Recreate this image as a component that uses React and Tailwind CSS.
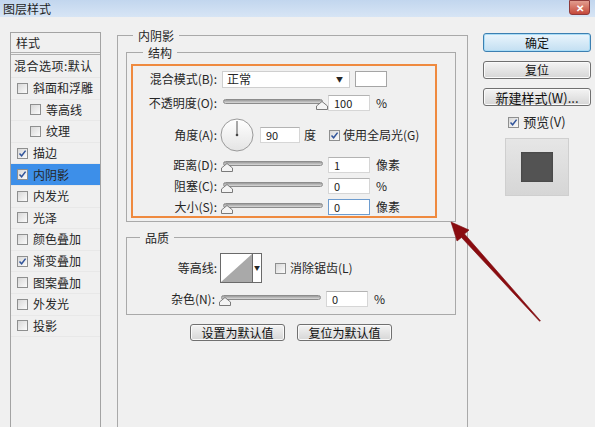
import React from 'react';

const Check = ({ checked }) => (
  <span className="flex h-[11px] w-[11px] shrink-0 items-center justify-center border border-[#8e8f8f] bg-linear-to-br from-[#d8d8d8] to-[#fbfbfb]">
    {checked && (
      <svg width="9" height="9" viewBox="0 0 9 9">
        <path d="M1.5 4.5 L3.6 6.8 L7.6 1.6" stroke="#30549a" strokeWidth="1.5" fill="none" />
      </svg>
    )}
  </span>
);

const Slider = ({ end }) => (
  <div className="relative h-[14px] w-[104px] shrink-0">
    <div className="absolute left-[2px] top-[3px] h-[5px] w-[100px] rounded-full border border-[#8c8c8c] bg-linear-to-b from-[#9a9a9a] to-[#dadada]" />
    <svg className={`absolute top-[5px] ${end ? 'left-[95px]' : 'left-0'}`} width="12" height="9" viewBox="0 0 12 9">
      <polygon points="6,0.5 11.5,5 11.5,8.5 0.5,8.5 0.5,5" fill="#f4f4f4" stroke="#7a7a7a" />
    </svg>
  </div>
);

const Field = ({ value, w = 'w-[42px]', focus }) => (
  <div className={`${w} h-[16px] shrink-0 border bg-white pl-[5px] text-[11px] leading-[14px] text-[#222] ${focus ? 'border-[#6d9ccf]' : 'border-[#d6d6d6] border-t-[#b3b3b3]'}`}>
    {value}
  </div>
);

const Btn = ({ children, primary, className = '' }) => (
  <div
    className={`flex items-center justify-center rounded-[3px] border text-[12px] leading-none text-[#111] ${
      primary
        ? 'border-[#3c7fb1] bg-linear-to-b from-[#eaf5fc] to-[#c3dff2] shadow-[inset_0_0_0_1px_#a9dcf6]'
        : 'border-[#707070] bg-linear-to-b from-[#f4f4f4] to-[#d6d6d6] shadow-[inset_0_0_0_1px_#fafafa]'
    } ${className}`}
  >
    {children}
  </div>
);

const effects = [
  { t: '斜面和浮雕' },
  { t: '等高线', sub: true },
  { t: '纹理', sub: true },
  { t: '描边', c: true },
  { t: '内阴影', c: true, active: true },
  { t: '内发光' },
  { t: '光泽' },
  { t: '颜色叠加' },
  { t: '渐变叠加', c: true },
  { t: '图案叠加' },
  { t: '外发光' },
  { t: '投影' },
];

const SliderRow = ({ label, value, unit, end, focus, labelW = 'w-[84px]', mt }) => (
  <div className={`flex h-[18px] items-center ${mt}`}>
    <div className={`${labelW} shrink-0 text-right`}>{label}</div>
    <div className="ml-[4px]">
      <Slider end={end} />
    </div>
    <div className="ml-[3px]">
      <Field value={value} focus={focus} />
    </div>
    <div className="ml-[6px]">{unit}</div>
  </div>
);

export default function App() {
  return (
    <div className="relative h-[427px] w-[595px] overflow-hidden bg-[#f0f0f0] font-['Noto_Sans_CJK_SC',sans-serif] text-[12px] leading-[16px] text-[#262626]">
      {/* title bar */}
      <div className="relative flex h-[17px] items-center bg-linear-to-b from-[#c2d6ee] to-[#d7e5f5] pl-[3px] text-[12px] text-[#1e1e1e]">
        图层样式
        <div className="absolute right-[5px] top-0 flex h-[15px] w-[21px] items-center justify-center rounded-b-[3px] border border-[#8e3a3a] bg-linear-to-b from-[#e19c8e] to-[#c4473a] text-[10px] font-bold leading-none text-white">
          ✕
        </div>
      </div>

      <div className="flex">
        {/* left list */}
        <div className="ml-[10px] mt-[15px] h-[420px] w-[91px] shrink-0 border border-[#a3a3a3]">
          <div className="flex h-[22px] items-center border-b-[3px] border-double border-[#b0b0b0] pl-[5px]">样式</div>
          <div className="flex h-[23px] items-center whitespace-nowrap border-b border-[#e6e6e6] pl-[3px] tracking-[0.5px]">混合选项:默认</div>
          {effects.map((e) => (
            <div
              key={e.t}
              className={`flex h-[21.6px] items-center gap-[5px] border-b border-[#e8e8e8] ${e.sub ? 'pl-[19px]' : 'pl-[6px]'} ${
                e.active ? 'bg-[#3d8fe9]' : ''
              }`}
            >
              <Check checked={e.c} />
              <span>{e.t}</span>
            </div>
          ))}
        </div>

        {/* middle */}
        <fieldset className="ml-[16px] mt-[10px] h-[420px] w-[351px] shrink-0 border border-[#a9a9a9]">
          <legend className="ml-[15px] px-[5px] leading-[17px]">内阴影</legend>

          <fieldset className="ml-[8px] w-[330px] border border-[#a9a9a9] pb-[3px]">
            <legend className="ml-[16px] px-[5px] leading-[17px]">结构</legend>
            <div className="ml-[4px] mt-[3px] h-[154px] w-[306px] border-2 border-[#ef8a3f]">
              <div className="mt-[4px] flex h-[18px] items-center">
                <div className="w-[84px] shrink-0 text-right">混合模式(B):</div>
                <div className="ml-[5px] flex h-[17px] w-[128px] items-center justify-between border border-[#cfcfcf] bg-white pl-[4px] pr-[6px]">
                  <span>正常</span>
                  <span className="text-[7px] leading-none">▼</span>
                </div>
                <div className="ml-[5px] h-[16px] w-[32px] border border-[#a5a5a5] bg-white" />
              </div>

              <SliderRow label="不透明度(O):" value="100" unit="%" end mt="mt-[6px]" />

              <div className="mt-[6px] flex h-[34px] items-center">
                <div className="w-[84px] shrink-0 text-right">角度(A):</div>
                <svg className="ml-[3px] shrink-0" width="34" height="34" viewBox="0 0 34 34">
                  <defs>
                    <linearGradient id="dial" x1="0" y1="0" x2="0" y2="1">
                      <stop offset="0" stopColor="#ffffff" />
                      <stop offset="1" stopColor="#e4e4e4" />
                    </linearGradient>
                  </defs>
                  <circle cx="17" cy="17" r="16" fill="url(#dial)" stroke="#9a9a9a" />
                  <line x1="17" y1="17" x2="17" y2="3" stroke="#555" strokeWidth="1" />
                  <circle cx="17" cy="17" r="1.3" fill="#444" />
                </svg>
                <div className="ml-[6px]">
                  <Field value="90" w="w-[40px]" />
                </div>
                <div className="ml-[4px]">度</div>
                <div className="ml-[13px]">
                  <Check checked />
                </div>
                <div className="ml-[3px]">使用全局光(G)</div>
              </div>

              <SliderRow label="距离(D):" value="1" unit="像素" mt="mt-[4px]" />
              <SliderRow label="阻塞(C):" value="0" unit="%" mt="mt-[3px]" />
              <SliderRow label="大小(S):" value="0" unit="像素" focus mt="mt-[3px]" />
            </div>
          </fieldset>

          <fieldset className="ml-[8px] mt-[7px] w-[330px] border border-[#a9a9a9] pb-[6px]">
            <legend className="ml-[13px] px-[5px] leading-[17px]">品质</legend>
            <div className="mt-[7px] flex h-[30px] items-center">
              <div className="w-[90px] shrink-0 text-right">等高线:</div>
              <div className="ml-[3px] flex h-[30px] w-[42px] border border-[#6a6a6a] bg-white">
                <svg width="31" height="28" viewBox="0 0 31 28">
                  <polygon points="0,28 31,0 31,28" fill="#a9a9a9" />
                </svg>
                <div className="flex flex-1 items-center justify-center border-l border-[#6a6a6a] text-[6px] leading-none">▼</div>
              </div>
              <div className="ml-[13px]">
                <Check />
              </div>
              <div className="ml-[4px]">消除锯齿(L)</div>
            </div>
            <div className="mt-[7px]">
              <SliderRow label="杂色(N):" value="0" unit="%" labelW="w-[88px]" />
            </div>
          </fieldset>

          <div className="mt-[9px] flex justify-center gap-[12px] pr-[3px]">
            <Btn className="h-[17px] w-[95px]">设置为默认值</Btn>
            <Btn className="h-[17px] w-[95px]">复位为默认值</Btn>
          </div>
        </fieldset>

        {/* right */}
        <div className="ml-[15px] mt-[16px] w-[108px] shrink-0">
          <Btn primary className="h-[19px]">确定</Btn>
          <Btn className="mt-[9px] h-[18px]">复位</Btn>
          <Btn className="mt-[9px] h-[18px] text-[13px]">新建样式(W)...</Btn>
          <div className="mt-[8px] flex items-center justify-center gap-[4px] text-[13px]">
            <Check checked />
            <span>预览(V)</span>
          </div>
          <div className="mx-auto mt-[8px] flex h-[58px] w-[64px] items-center justify-center border border-[#cfcfcf] bg-linear-to-b from-[#e6e6e6] to-[#d6d6d6]">
            <div className="h-[30px] w-[32px] bg-[#535353] shadow-[inset_0_0_2px_#333]" />
          </div>
        </div>
      </div>

      {/* annotation arrow */}
      <svg className="pointer-events-none absolute left-0 top-0" width="595" height="427" viewBox="0 0 595 427">
        <polygon
          points="451,222 469,230 464.5,234 540.4,320.7 539.6,321.3 461.5,237.5 457,241"
          fill="#8a0c10"
          stroke="#7a0a0e"
          strokeWidth="0.6"
          strokeLinejoin="round"
        />
      </svg>
    </div>
  );
}
